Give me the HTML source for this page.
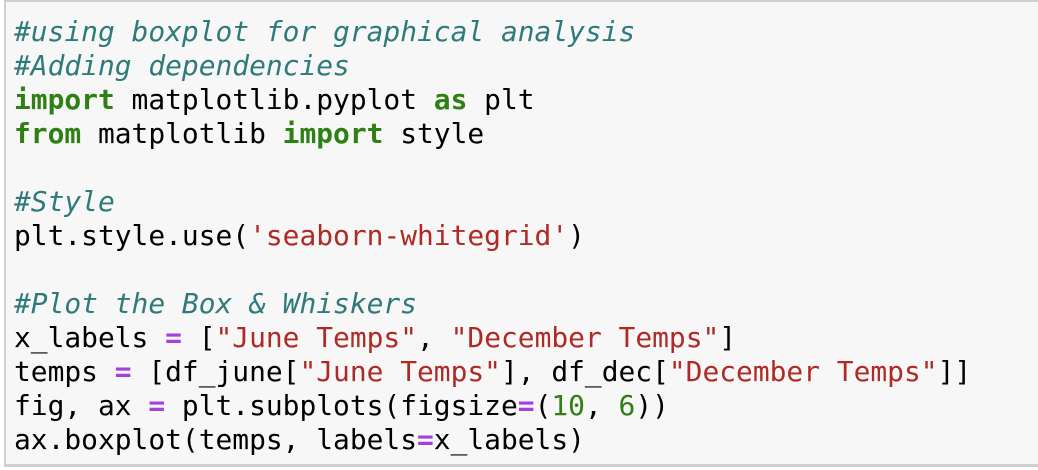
<!DOCTYPE html>
<html><head><style>
html,body{margin:0;padding:0;background:#fff;}
.cell{position:absolute;left:4px;top:0;width:1040px;height:467px;background:#f7f7f7;border-top:2px solid #cfcfcf;border-left:2px solid #cfcfcf;border-bottom:3px solid #cfcfcf;box-sizing:border-box;}
pre{margin:0;position:absolute;left:8px;top:13px;font-family:"DejaVu Sans Mono","Liberation Mono",monospace;font-size:27.9px;line-height:34px;color:#000;}
.c{color:#2f7a7a;font-style:italic}
.k{color:#2e8014;font-weight:bold}
.s{color:#b02a25}
.o{color:#a43fe0;font-weight:bold}
.n{color:#2e8014}
</style></head><body>
<div class="cell"><pre><span class="c">#using boxplot for graphical analysis</span>
<span class="c">#Adding dependencies</span>
<span class="k">import</span> matplotlib.pyplot <span class="k">as</span> plt
<span class="k">from</span> matplotlib <span class="k">import</span> style

<span class="c">#Style</span>
plt.style.use(<span class="s">'seaborn-whitegrid'</span>)

<span class="c">#Plot the Box &amp; Whiskers</span>
x_labels <span class="o">=</span> [<span class="s">"June Temps"</span>, <span class="s">"December Temps"</span>]
temps <span class="o">=</span> [df_june[<span class="s">"June Temps"</span>], df_dec[<span class="s">"December Temps"</span>]]
fig, ax <span class="o">=</span> plt.subplots(figsize<span class="o">=</span>(<span class="n">10</span>, <span class="n">6</span>))
ax.boxplot(temps, labels<span class="o">=</span>x_labels)</pre></div>
</body></html>
